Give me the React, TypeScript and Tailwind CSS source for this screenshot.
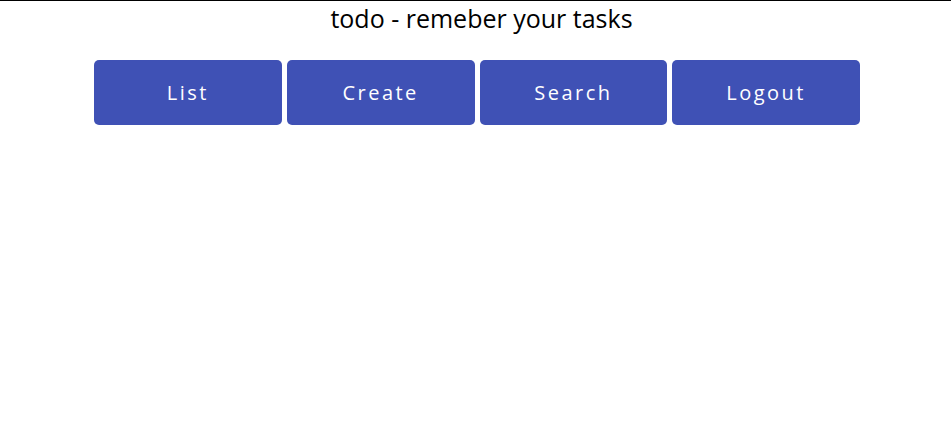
import React from "react"

const App: React.FC = () => {
  const links = ["List", "Create", "Search", "Logout"]

  return (
    <div className="min-h-[422px] border-t border-black bg-white font-['Open_Sans',sans-serif]">
      <h1 className="pl-[12px] pt-[1px] text-center text-[25px] leading-[32px] text-black">
        todo - remeber your tasks
      </h1>
      <nav className="ml-[94px] mt-[26px] flex w-[766px] gap-[5px]">
        {links.map((label) => (
          <a
            key={label}
            href="#"
            className="flex h-[65px] flex-1 items-center justify-center rounded-[5px] bg-[#3f51b5] text-[20px] tracking-[2.5px] text-white"
          >
            {label}
          </a>
        ))}
      </nav>
    </div>
  )
}

export default App
